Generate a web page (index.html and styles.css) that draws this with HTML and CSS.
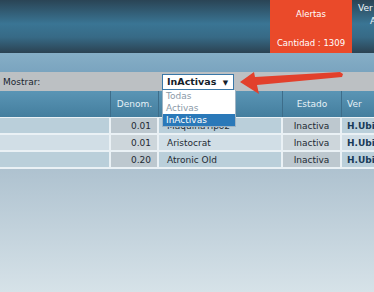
FILE: index.html
```html
<!DOCTYPE html>
<html lang="es">
<head>
  <meta charset="UTF-8">
  <title>Máquinas</title>
  <link rel="stylesheet" href="styles.css">
</head>
<body>

  <header class="top">
    <div class="top-fill"></div>
    <div class="alerts">
      <p class="alerts-title">Alertas</p>
      <p class="alerts-count">Cantidad : 1309</p>
    </div>
    <div class="see">
      <p class="see-one">Ver más</p>
      <p class="see-two">Alertas</p>
    </div>
  </header>

  <div class="band"></div>

  <div class="filter">
    <span class="filter-label">Mostrar:</span>
    <div class="picker">
      <div class="picker-box">InActivas <span class="picker-caret">&#9660;</span></div>
      <ul class="picker-list">
        <li>Todas</li>
        <li>Activas</li>
        <li class="picked">InActivas</li>
      </ul>
    </div>
    <svg class="pointer" width="106" height="24" viewBox="0 0 106 24">
      <polygon points="0,10 14,0 15,5 100,0 103,2 102,5 17,13 19,22" fill="#e2402c"/>
    </svg>
  </div>

  <table class="grid">
    <thead>
      <tr>
        <th class="c-first"></th>
        <th class="c-denom">Denom.</th>
        <th class="c-name"></th>
        <th class="c-state">Estado</th>
        <th class="c-ver">Ver</th>
      </tr>
    </thead>
    <tbody>
      <tr>
        <td></td>
        <td class="num">0.01</td>
        <td class="name">MaquinaTipo2</td>
        <td class="state">Inactiva</td>
        <td class="link">H.Ubicación</td>
      </tr>
      <tr>
        <td></td>
        <td class="num">0.01</td>
        <td class="name">Aristocrat</td>
        <td class="state">Inactiva</td>
        <td class="link">H.Ubicación</td>
      </tr>
      <tr>
        <td></td>
        <td class="num">0.20</td>
        <td class="name">Atronic Old</td>
        <td class="state">Inactiva</td>
        <td class="link">H.Ubicación</td>
      </tr>
    </tbody>
  </table>

</body>
</html>
```

FILE: styles.css
```css
html, body {
  height: 100%;
}
body {
  margin: 0;
  overflow: hidden;
  font-family: "DejaVu Sans", Verdana, sans-serif;
  background: linear-gradient(#a7bccb 50%, #d6e2e8);
  color: #1e2a33;
}
p {
  margin: 0;
}

.top {
  display: flex;
  height: 53px;
  background: linear-gradient(#2a4455, #3a7594 45%, #376a86 70%, #2b4252);
}
.top-fill {
  width: 270px;
  flex: none;
}
.alerts {
  width: 82px;
  flex: none;
  background: #ea4a2a;
  color: #fff;
  font-size: 8.5px;
  text-align: center;
  display: flex;
  flex-direction: column;
  justify-content: space-between;
  padding: 9px 0 5px;
  box-sizing: border-box;
}
.see {
  flex: none;
  width: 60px;
  color: #f0f6fa;
  font-size: 9px;
  padding-top: 3px;
}
.see-one {
  padding-left: 6px;
}
.see-two {
  padding-left: 18px;
  margin-top: 3px;
}

.band {
  height: 19px;
  background: linear-gradient(#86aec6, #7aa4bf);
}

.filter {
  position: relative;
  display: flex;
  align-items: center;
  height: 19px;
  background: #bcc0c3;
  font-size: 9px;
}
.filter-label {
  padding-left: 3px;
  width: 159px;
  color: #1a2530;
}
.picker {
  position: relative;
  z-index: 2;
}
.picker-box {
  width: 66px;
  height: 14px;
  line-height: 14px;
  padding-left: 4px;
  background: #fff;
  border: 1px solid #3a78a8;
  font-weight: bold;
  font-size: 9.5px;
  color: #14202a;
}
.picker-caret {
  font-size: 7px;
  padding-left: 3px;
}
.picker-list {
  position: absolute;
  top: 16px;
  left: 0;
  width: 72px;
  margin: 0;
  padding: 0;
  list-style: none;
  background: #fff;
  border: 1px solid #9fb4c4;
  border-top: none;
  font-size: 9px;
}
.picker-list li {
  height: 12px;
  line-height: 12px;
  padding-left: 3px;
  color: #8b9aa8;
}
.picker-list .picked {
  background: #2a79b9;
  color: #fff;
}
.pointer {
  position: absolute;
  left: 240px;
  top: 0;
}

.grid {
  border-collapse: separate;
  border-spacing: 0;
  width: 420px;
  font-size: 9px;
  table-layout: fixed;
}
.grid th {
  height: 26px;
  padding: 0;
  background: linear-gradient(#5a95b5, #447e9e);
  color: #e6f1f7;
  font-weight: normal;
  border-right: 1px solid #3d6d8a;
}
.c-first { width: 110px; }
.c-denom { width: 47px; }
.c-name { width: 123px; }
.c-state { width: 58px; }
.c-ver { width: 80px; text-align: left; padding-left: 5px !important; }

.grid td {
  height: 15px;
  padding: 0;
  border-right: 2px solid #eaf1f5;
  border-top: 2px solid #eaf1f5;
  background: #bacfda;
}
.grid tr:first-child td {
  border-top: 1px solid #eaf1f5;
}
.grid tr:last-child td {
  border-bottom: 2px solid #eaf1f5;
}
.grid td.num,
.grid td.state {
  background: #bdc8cf;
}
.grid tr:nth-child(2) td {
  background: #d1dee6;
}
.grid tr:nth-child(2) td.num,
.grid tr:nth-child(2) td.state {
  background: #cdd6db;
}
.num {
  text-align: right;
  padding-right: 6px !important;
}
.name {
  padding-left: 8px !important;
}
.state {
  text-align: center;
}
.link {
  padding-left: 5px !important;
  font-weight: bold;
  color: #173a58;
}
```
